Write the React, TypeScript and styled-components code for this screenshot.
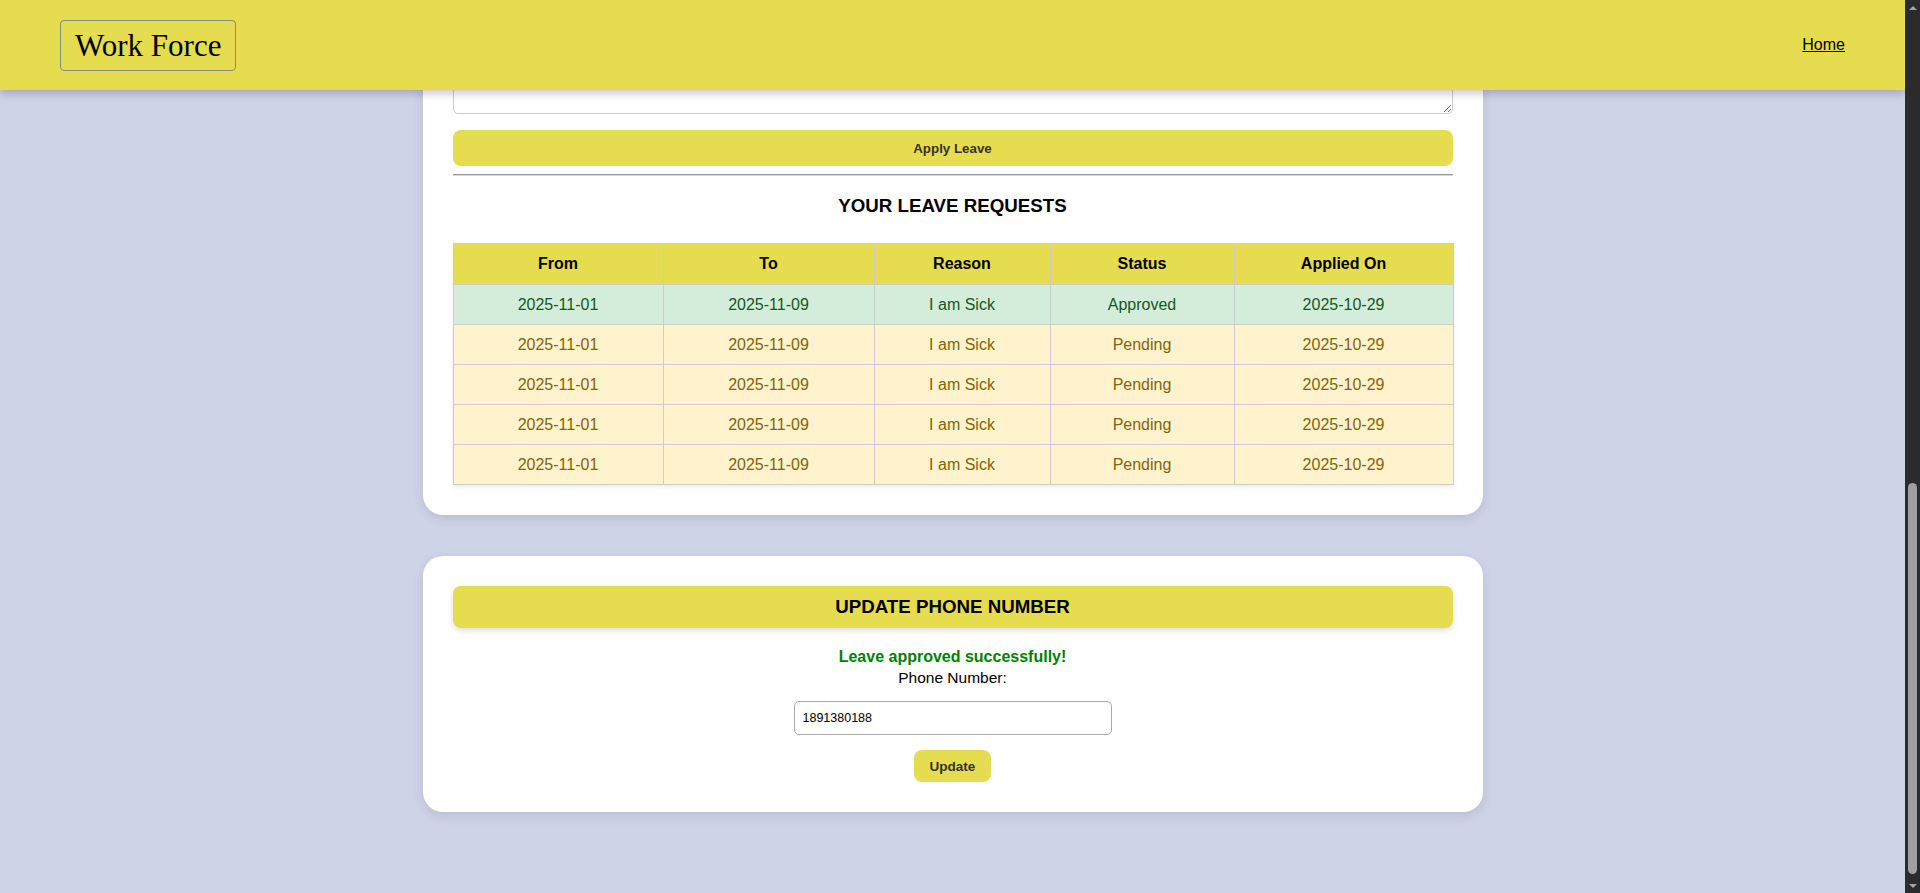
import React from "react";
import styled, { createGlobalStyle } from "styled-components";

const palette = {
  yellow: "#e5dc50",
  page: "#cfd3e8",
  text: "#333",
  border: "#cccccc",
  track: "#2b2b2b",
  thumb: "#a0a0a0",
};

const GlobalStyle = createGlobalStyle`
  html, body {
    margin: 0;
    height: 100%;
    overflow: hidden;
  }
  body {
    font-family: "Liberation Sans", Arial, sans-serif;
    background: ${palette.page};
  }
  #root {
    height: 100%;
  }
`;

const Screen = styled.div`
  display: flex;
  height: 100vh;
  overflow: hidden;
  background: ${palette.page};
`;

const Viewport = styled.div`
  position: relative;
  flex: 1;
  overflow: hidden;
`;

// the window's scrollbar, parked at the bottom of the dashboard
const ScrollTrack = styled.div`
  width: 15px;
  display: flex;
  flex-direction: column;
  align-items: center;
  background: ${palette.track};
`;

const ScrollArrow = styled.div<{ $dir: "up" | "down" }>`
  height: 17px;
  width: 100%;
  display: flex;
  align-items: center;
  justify-content: center;

  &::after {
    content: "";
    width: 0;
    height: 0;
    border-left: 4px solid transparent;
    border-right: 4px solid transparent;
    ${(p) =>
      p.$dir === "up"
        ? `border-bottom: 4px solid #a3a3a3; margin-top: -2px;`
        : `border-top: 4px solid #a3a3a3; margin-bottom: -2px;`}
  }
`;

const ScrollSpace = styled.div`
  flex: 1;
`;

const ScrollThumb = styled.div`
  width: 9px;
  height: 391px;
  margin-bottom: 2px;
  border-radius: 5px;
  background: ${palette.thumb};
`;

const Header = styled.header`
  position: absolute;
  top: 0;
  left: 0;
  right: 0;
  z-index: 10;
  height: 90px;
  padding: 0 60px;
  display: flex;
  align-items: center;
  justify-content: space-between;
  background: ${palette.yellow};
  box-shadow: 0 4px 8px rgba(0, 0, 0, 0.2);
`;

const Logo = styled.div`
  padding: 6px 14px;
  border: 1px solid #888;
  border-radius: 4px;
  font-family: "Liberation Serif", "Times New Roman", serif;
  font-size: 31px;
  line-height: 37px;
  color: #000;
`;

const NavLink = styled.a`
  font-size: 16px;
  color: #000;
  text-decoration: underline;
`;

const Main = styled.main`
  display: flex;
  flex-direction: column;
  align-items: center;
  gap: 41px;
  padding: 40px 0 81px;
`;

const Card = styled.section`
  width: 1060px;
  box-sizing: border-box;
  padding: 30px;
  background: #fff;
  border-radius: 20px;
  box-shadow: 0 4px 12px rgba(0, 0, 0, 0.1);
  text-align: center;
`;

const SectionBar = styled.h3`
  margin: 0 0 20px;
  padding: 10px;
  background: ${palette.yellow};
  border-radius: 8px;
  font-size: 18.72px;
  line-height: 22px;
  color: #000;
  box-shadow: 0 2px 6px rgba(0, 0, 0, 0.15);
`;

const ReasonArea = styled.textarea`
  display: block;
  width: 100%;
  height: 44px;
  box-sizing: border-box;
  margin: 0 0 16px;
  padding: 8px;
  border: 1px solid ${palette.border};
  border-radius: 5px;
  font-family: inherit;
  font-size: 13px;
  resize: vertical;
`;

const WideButton = styled.button`
  display: block;
  width: 100%;
  height: 36px;
  border: none;
  border-radius: 8px;
  background: ${palette.yellow};
  color: ${palette.text};
  font-family: inherit;
  font-size: 13.33px;
  font-weight: bold;
  cursor: pointer;
`;

const Divider = styled.hr`
  margin: 8px 0 0;
  border: none;
  border-top: 1px solid #9a9a9a;
  border-bottom: 1px solid #d6d6d6;
`;

const ListTitle = styled.h3`
  margin: 19px 0 26px;
  font-size: 18.72px;
  line-height: 22px;
  color: #000;
`;

const Table = styled.table`
  width: 100%;
  table-layout: fixed;
  border-collapse: collapse;
  font-size: 16px;
  box-shadow: 0 2px 4px rgba(0, 0, 0, 0.08);

  th {
    padding: 11px 8px;
    line-height: 18px;
    border: 1px solid ${palette.border};
    background: ${palette.yellow};
    color: #000;
    font-weight: bold;
  }

  td {
    padding: 11px 8px;
    line-height: 17px;
    border: 1px solid ${palette.border};
  }
`;

const Row = styled.tr<{ $status: string }>`
  background: ${(p) => (p.$status === "Approved" ? "#d4edda" : "#fff3cd")};
  color: ${(p) => (p.$status === "Approved" ? "#155724" : "#856404")};
`;

const Message = styled.div`
  font-size: 16px;
  line-height: 18px;
  font-weight: bold;
  color: green;
`;

const PhoneLabel = styled.label`
  display: block;
  margin-top: 3px;
  font-size: 15.5px;
  line-height: 17px;
  color: #000;
`;

const PhoneInput = styled.input`
  display: block;
  width: 318px;
  height: 34px;
  box-sizing: border-box;
  margin: 15px auto 15px;
  padding: 0 8px;
  border: 1px solid #aaa;
  border-radius: 5px;
  font-family: inherit;
  font-size: 12.5px;
  color: #000;
`;

const SmallButton = styled.button`
  height: 32px;
  padding: 0 16px;
  border: none;
  border-radius: 8px;
  background: ${palette.yellow};
  color: ${palette.text};
  font-family: inherit;
  font-size: 13.5px;
  font-weight: bold;
  cursor: pointer;
`;

const columns = [
  { label: "From", width: 210 },
  { label: "To", width: 211 },
  { label: "Reason", width: 176 },
  { label: "Status", width: 184 },
  { label: "Applied On", width: 219 },
];

const leaves = [
  { id: 1, from: "2025-11-01", to: "2025-11-09", reason: "I am Sick", status: "Approved", applied: "2025-10-29" },
  { id: 2, from: "2025-11-01", to: "2025-11-09", reason: "I am Sick", status: "Pending", applied: "2025-10-29" },
  { id: 3, from: "2025-11-01", to: "2025-11-09", reason: "I am Sick", status: "Pending", applied: "2025-10-29" },
  { id: 4, from: "2025-11-01", to: "2025-11-09", reason: "I am Sick", status: "Pending", applied: "2025-10-29" },
  { id: 5, from: "2025-11-01", to: "2025-11-09", reason: "I am Sick", status: "Pending", applied: "2025-10-29" },
];

const App: React.FC = () => {
  return (
    <Screen>
      <GlobalStyle />
      <Viewport>
        <Header>
          <Logo>Work Force</Logo>
          <NavLink href="#">Home</NavLink>
        </Header>
        <Main>
          <Card>
            <ReasonArea />
            <WideButton type="button">Apply Leave</WideButton>
            <Divider />
            <ListTitle>YOUR LEAVE REQUESTS</ListTitle>
            <Table>
              <colgroup>
                {columns.map((c) => (
                  <col key={c.label} style={{ width: c.width }} />
                ))}
              </colgroup>
              <thead>
                <tr>
                  {columns.map((c) => (
                    <th key={c.label}>{c.label}</th>
                  ))}
                </tr>
              </thead>
              <tbody>
                {leaves.map((leave) => (
                  <Row key={leave.id} $status={leave.status}>
                    <td>{leave.from}</td>
                    <td>{leave.to}</td>
                    <td>{leave.reason}</td>
                    <td>{leave.status}</td>
                    <td>{leave.applied}</td>
                  </Row>
                ))}
              </tbody>
            </Table>
          </Card>

          <Card>
            <SectionBar>UPDATE PHONE NUMBER</SectionBar>
            <Message>Leave approved successfully!</Message>
            <PhoneLabel>Phone Number:</PhoneLabel>
            <PhoneInput type="text" defaultValue="1891380188" />
            <SmallButton type="button">Update</SmallButton>
          </Card>
        </Main>
      </Viewport>
      <ScrollTrack>
        <ScrollArrow $dir="up" />
        <ScrollSpace />
        <ScrollThumb />
        <ScrollArrow $dir="down" />
      </ScrollTrack>
    </Screen>
  );
};

export default App;
